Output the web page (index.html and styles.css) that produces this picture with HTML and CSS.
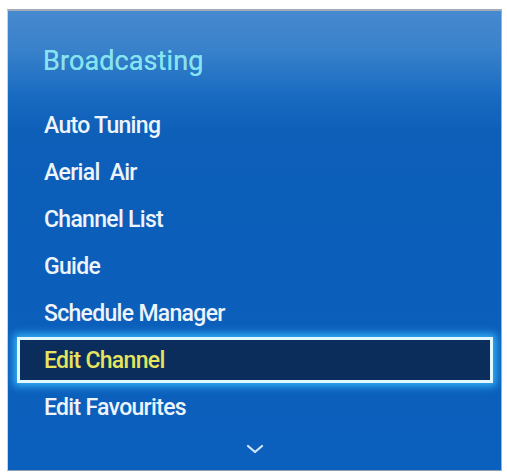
FILE: index.html
```html
<!DOCTYPE html>
<html>
<head>
<meta charset="utf-8">
<link rel="stylesheet" href="styles.css">
</head>
<body>
<div class="panel">
  <h1 class="title">Broadcasting</h1>
  <ul class="menu">
    <li class="item">Auto Tuning</li>
    <li class="item">Aerial&nbsp;&nbsp;Air</li>
    <li class="item">Channel List</li>
    <li class="item">Guide</li>
    <li class="item">Schedule Manager</li>
    <li class="item selected">Edit Channel</li>
    <li class="item">Edit Favourites</li>
  </ul>
  <div class="more">
    <svg width="18" height="10" viewBox="0 0 18 10"><polyline points="2,2 9,8 16,2" fill="none" stroke="#d3e8ff" stroke-width="2.2" stroke-linecap="round" stroke-linejoin="round"/></svg>
  </div>
</div>
</body>
</html>
```

FILE: styles.css
```css
html, body {
  margin: 0;
  padding: 0;
  background: #ffffff;
}
body {
  padding: 9px 0 0 7px;
  font-family: Roboto, "Liberation Sans", Arial, sans-serif;
}
.panel {
  box-sizing: border-box;
  width: 495px;
  height: 462px;
  border-top: 2px solid #a3acb6;
  border-left: 1px solid #c9d3de;
  border-right: 1px solid #9fb2c6;
  border-bottom: 1px solid #8fa0b2;
  background: linear-gradient(to bottom, #4689cf 0%, #3a82cb 8%, #1a6cc2 18%, #0d5fb8 26%, #0b5eb9 50%, #0c60bd 100%);
  padding-top: 30px;
}
.title {
  margin: 0 0 21px 0;
  padding-left: 35px;
  font-size: 27px;
  font-weight: 400;
  line-height: 40px;
  letter-spacing: 0.1px;
  color: #86e3ef;
  text-shadow: 0 0 0.4px #86e3ef;
}
.menu {
  list-style: none;
  margin: 0;
  padding: 0;
}
.item {
  box-sizing: border-box;
  height: 47px;
  display: flex;
  align-items: center;
  padding-left: 36px;
  font-size: 23px;
  font-weight: 500;
  letter-spacing: -0.7px;
  color: #eef4fb;
}
.item.selected {
  height: 46px;
  margin: 0 8px 1px 9px;
  padding-left: 24px;
  border: 3px solid #e2f7ff;
  background: #0a2d5b;
  color: #e6e45f;
  box-shadow: 0 0 8px 3px rgba(58, 190, 255, 0.9);
}
.more {
  display: flex;
  justify-content: center;
  padding-top: 13px;
}
.more svg {
  display: block;
}
```
